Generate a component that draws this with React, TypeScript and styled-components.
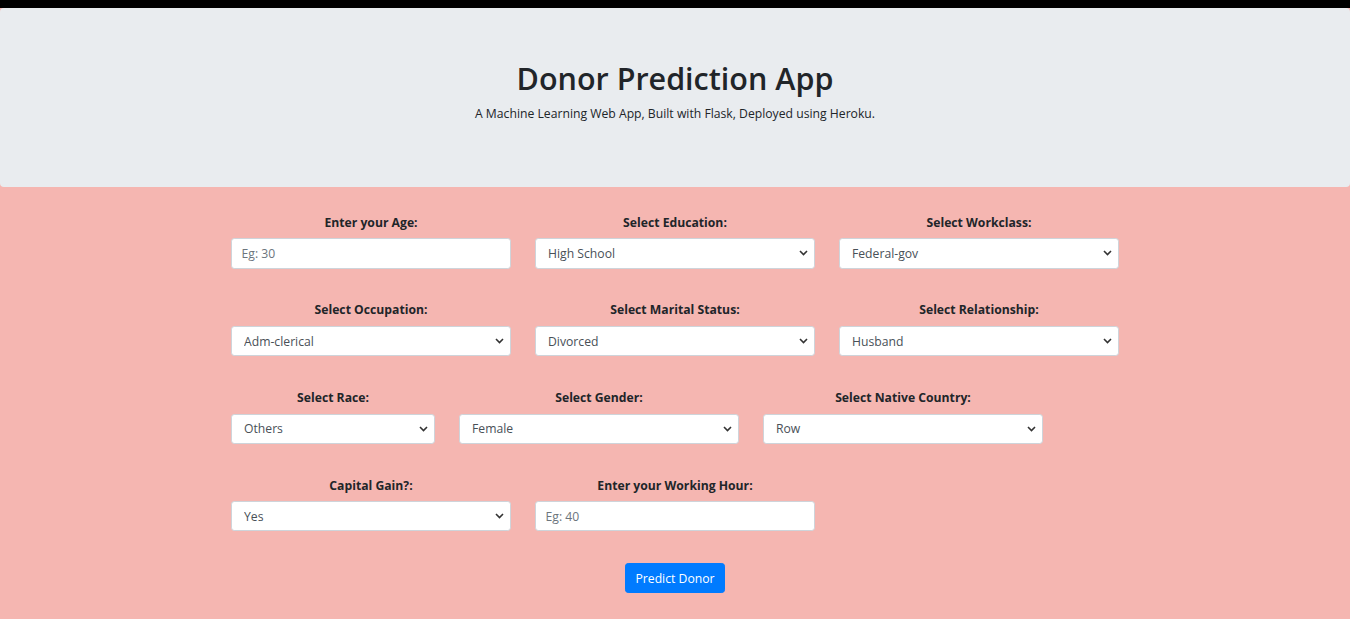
import { createGlobalStyle, styled } from 'styled-components';

const GlobalStyle = createGlobalStyle`
  html, body {
    margin: 0;
    padding: 0;
  }

  body {
    background: #f5b6b1;
    color: #212529;
    font-family: 'Open Sans', 'Noto Sans', sans-serif;
    font-size: 12.2px;
    line-height: 19.2px;
  }
`;

const TopBar = styled.div`
  background: #000;
  height: 8px;
`;

const Jumbotron = styled.header`
  background: #e9ecef;
  border-radius: 4px;
  margin-bottom: 25.6px;
  padding: 51.2px 0;
  text-align: center;
`;

const Title = styled.h1`
  font-size: 30.5px;
  font-weight: 600;
  line-height: 38.4px;
  margin: 0 0 6.4px;
`;

const Lead = styled.p`
  margin: 0 0 12.8px;
`;

const Container = styled.form`
  margin: 0 auto;
  width: 912px;
`;

const Row = styled.div`
  display: flex;
  margin-bottom: 31.6px;
`;

const Col = styled.div<{ $span: number }>`
  box-sizing: border-box;
  padding: 0 12px;
  text-align: center;
  width: ${({ $span }) => ($span / 12) * 100}%;
`;

const Label = styled.label`
  display: block;
  font-weight: 700;
  line-height: 19.2px;
  margin-bottom: 6.4px;
`;

const fieldBase = `
  appearance: none;
  background: #fff;
  border: 1px solid #ced4da;
  border-radius: 3.2px;
  box-sizing: border-box;
  color: #495057;
  display: block;
  font-family: inherit;
  font-size: 12.2px;
  height: 30.4px;
  line-height: 19.2px;
  margin: 0;
  outline: none;
  width: 100%;
`;

const TextInput = styled.input`
  ${fieldBase}
  padding: 0 9.6px;

  &::placeholder {
    color: #6c757d;
    opacity: 1;
  }
`;

const SelectWrap = styled.div`
  height: 30.4px;
  position: relative;
`;

const Select = styled.select`
  ${fieldBase}
  padding: 0 28px 0 12px;
`;

const Chevron = styled.svg`
  pointer-events: none;
  position: absolute;
  right: 7px;
  top: 12px;
`;

const ButtonRow = styled.div`
  display: flex;
  justify-content: center;
  padding-bottom: 26px;
`;

const Button = styled.button`
  background: #007bff;
  border: 1px solid #007bff;
  border-radius: 3.2px;
  color: #fff;
  cursor: pointer;
  font-family: inherit;
  font-size: 12.2px;
  height: 30.4px;
  line-height: 19.2px;
  padding: 0 9.6px;
`;

type Field =
  | { kind: 'input'; label: string; placeholder: string; span: number }
  | { kind: 'select'; label: string; options: string[]; span: number };

const rows: Field[][] = [
  [
    { kind: 'input', label: 'Enter your Age:', placeholder: 'Eg: 30', span: 4 },
    { kind: 'select', label: 'Select Education:', options: ['High School', 'Bachelors', 'Masters', 'Doctorate'], span: 4 },
    { kind: 'select', label: 'Select Workclass:', options: ['Federal-gov', 'Local-gov', 'Private', 'Self-emp'], span: 4 },
  ],
  [
    { kind: 'select', label: 'Select Occupation:', options: ['Adm-clerical', 'Craft-repair', 'Exec-managerial', 'Sales'], span: 4 },
    { kind: 'select', label: 'Select Marital Status:', options: ['Divorced', 'Married', 'Never-married', 'Widowed'], span: 4 },
    { kind: 'select', label: 'Select Relationship:', options: ['Husband', 'Not-in-family', 'Own-child', 'Wife'], span: 4 },
  ],
  [
    { kind: 'select', label: 'Select Race:', options: ['Others', 'White', 'Black'], span: 3 },
    { kind: 'select', label: 'Select Gender:', options: ['Female', 'Male'], span: 4 },
    { kind: 'select', label: 'Select Native Country:', options: ['Row', 'United-States'], span: 4 },
  ],
  [
    { kind: 'select', label: 'Capital Gain?:', options: ['Yes', 'No'], span: 4 },
    { kind: 'input', label: 'Enter your Working Hour:', placeholder: 'Eg: 40', span: 4 },
  ],
];

const FieldControl = ({ field }: { field: Field }) => {
  if (field.kind === 'input') {
    return <TextInput type="text" placeholder={field.placeholder} />;
  }

  return (
    <SelectWrap>
      <Select defaultValue={field.options[0]}>
        {field.options.map((option) => (
          <option key={option}>{option}</option>
        ))}
      </Select>
      <Chevron width="9" height="6" viewBox="0 0 9 6">
        <polyline points="1,1 4.5,4.5 8,1" fill="none" stroke="#333" strokeWidth="1.6" />
      </Chevron>
    </SelectWrap>
  );
};

export default function App() {
  return (
    <>
      <GlobalStyle />
      <TopBar />
      <Jumbotron>
        <Title>Donor Prediction App</Title>
        <Lead>A Machine Learning Web App, Built with Flask, Deployed using Heroku.</Lead>
      </Jumbotron>

      <Container onSubmit={(e) => e.preventDefault()}>
        {rows.map((row, i) => (
          <Row key={i}>
            {row.map((field) => (
              <Col key={field.label} $span={field.span}>
                <Label>{field.label}</Label>
                <FieldControl field={field} />
              </Col>
            ))}
          </Row>
        ))}
        <ButtonRow>
          <Button type="submit">Predict Donor</Button>
        </ButtonRow>
      </Container>
    </>
  );
}
